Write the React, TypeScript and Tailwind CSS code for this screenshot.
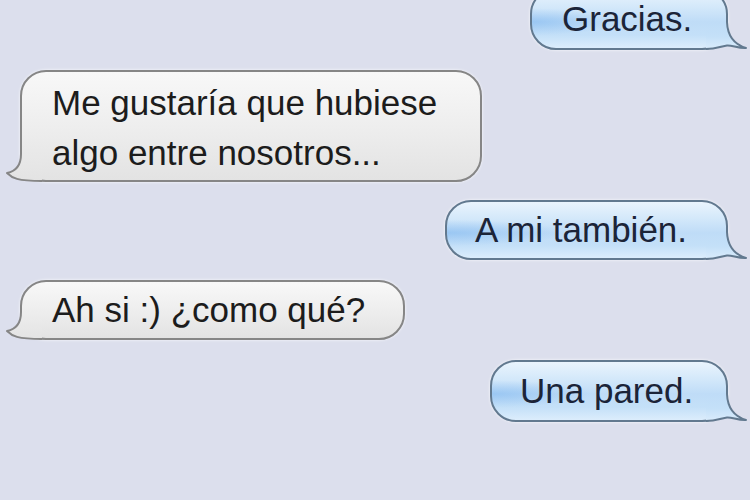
import React from "react"

type Side = "left" | "right"

const blueStops = [
  ["0%", "#eaf4fd"],
  ["30%", "#d3e8fa"],
  ["55%", "#bfdcf7"],
  ["78%", "#c4e0f8"],
  ["100%", "#dcedfc"],
]

const grayStops = [
  ["0%", "#f8f8f8"],
  ["50%", "#eeeeee"],
  ["100%", "#e3e3e3"],
]

function Tail({ side, id, height }: { side: Side; id: string; height: number }) {
  const stops = side === "right" ? blueStops : grayStops
  const stroke = side === "right" ? "#62798f" : "#868686"
  // gradient in svg space so the fill lines up with the bubble body
  const y1 = 32 - height
  if (side === "right") {
    return (
      <svg width="44" height="34" viewBox="0 0 44 34" className="absolute right-[-24px] bottom-[-4px]">
        <defs>
          <linearGradient id={id} gradientUnits="userSpaceOnUse" x1="0" y1={y1} x2="0" y2="32">
            {stops.map(([o, c]) => (
              <stop key={o} offset={o} stopColor={c} />
            ))}
          </linearGradient>
        </defs>
        <path d="M21 4 C21.5 17 27 26 40 30 C32 30.5 26 27 21 27.5 C16 28 10 31 0 31 L0 4 Z" fill={`url(#${id})`} />
        <path d="M21 4 C21.5 17 27 26 40 30 C32 30.5 26 27 21 27.5 C16 28 10 31 0 31" fill="none" stroke={stroke} strokeWidth="2" strokeLinejoin="round" />
      </svg>
    )
  }
  return (
    <svg width="44" height="34" viewBox="0 0 44 34" className="absolute left-[-20px] bottom-[-4px]">
      <defs>
        <linearGradient id={id} gradientUnits="userSpaceOnUse" x1="0" y1={y1} x2="0" y2="32">
          {stops.map(([o, c]) => (
            <stop key={o} offset={o} stopColor={c} />
          ))}
        </linearGradient>
      </defs>
      <path d="M19 4 C19 14 15 21 5 23 C10 28 15 31 40 31 L40 4 Z" fill={`url(#${id})`} />
      <path d="M19 4 C19 14 15 21 5 23 C10 28 15 31 40 31" fill="none" stroke={stroke} strokeWidth="2" strokeLinejoin="round" />
    </svg>
  )
}

function Sent({ id, children, className }: { id: string; children: React.ReactNode; className: string }) {
  return (
    <div
      className={`relative self-end mr-[22px] flex items-center rounded-[26px] border-2 border-[#62798f] bg-[radial-gradient(ellipse_at_0%_55%,rgba(130,185,240,0.6),rgba(130,185,240,0)_30%),linear-gradient(180deg,#eaf4fd_0%,#d3e8fa_30%,#bfdcf7_55%,#c4e0f8_78%,#dcedfc_100%)] text-[#1b2438] text-[35px] leading-[40px] shadow-[0_0_3px_rgba(255,255,255,0.9)] ${className}`}
    >
      <span className="relative z-10">{children}</span>
      <Tail side="right" id={id} height={62} />
    </div>
  )
}

function Received({ id, children, className, h = 60 }: { id: string; children: React.ReactNode; className: string; h?: number }) {
  return (
    <div
      className={`relative self-start ml-[20px] rounded-[26px] border-2 border-[#868686] bg-[linear-gradient(180deg,#f8f8f8_0%,#eeeeee_50%,#e3e3e3_100%)] text-[#1c1c1c] text-[35px] shadow-[0_0_3px_rgba(255,255,255,0.9)] ${className}`}
    >
      <span className="relative z-10">{children}</span>
      <Tail side="left" id={id} height={h} />
    </div>
  )
}

export default function App() {
  return (
    <div className="w-[750px] h-[500px] overflow-hidden bg-[#dcdfed] font-['Liberation_Sans',Arial,sans-serif]">
      <div className="flex flex-col">
        <Sent id="t1" className="-mt-[12px] w-[198px] h-[62px] pl-[30px]">Gracias.</Sent>
        <Received id="t2" h={112} className="mt-[20px] w-[462px] h-[112px] pl-[30px] pt-[6px] leading-[50px]">
          Me gustaría que hubiese
          <br />
          algo entre nosotros...
        </Received>
        <Sent id="t3" className="mt-[18px] w-[283px] h-[60px] pl-[28px]">A mi también.</Sent>
        <Received id="t4" className="mt-[20px] w-[385px] h-[60px] pl-[30px] flex items-center leading-[40px]">
          Ah si :) ¿como qué?
        </Received>
        <Sent id="t5" className="mt-[20px] w-[238px] h-[62px] pl-[28px]">Una pared.</Sent>
      </div>
    </div>
  )
}
